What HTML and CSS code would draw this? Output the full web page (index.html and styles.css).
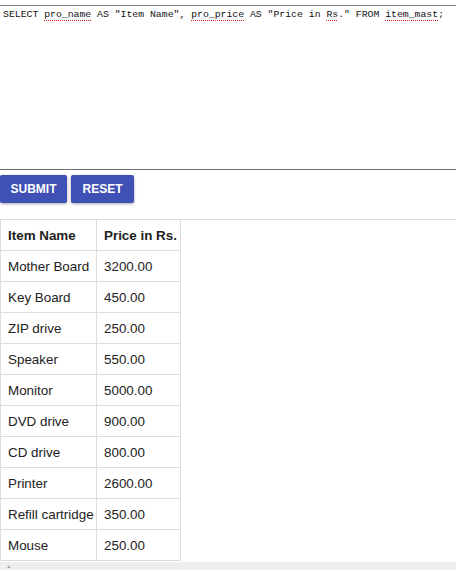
FILE: index.html
```html
<!DOCTYPE html>
<html>
<head>
<meta charset="utf-8">
<link rel="stylesheet" href="styles.css">
</head>
<body>
<div class="editor">
  <div class="code">SELECT <span class="sp">pro_name</span> AS "Item Name", <span class="sp">pro_price</span> AS "Price in <span class="sp">Rs</span>." FROM <span class="sp">item_mast</span>;</div>
</div>
<div class="actions">
  <button class="btn">SUBMIT</button>
  <button class="btn">RESET</button>
</div>
<div class="results">
  <table class="grid">
    <colgroup><col class="c1"><col class="c2"></colgroup>
    <thead>
      <tr><th>Item Name</th><th>Price in Rs.</th></tr>
    </thead>
    <tbody>
      <tr><td>Mother Board</td><td>3200.00</td></tr>
      <tr><td>Key Board</td><td>450.00</td></tr>
      <tr><td>ZIP drive</td><td>250.00</td></tr>
      <tr><td>Speaker</td><td>550.00</td></tr>
      <tr><td>Monitor</td><td>5000.00</td></tr>
      <tr><td>DVD drive</td><td>900.00</td></tr>
      <tr><td>CD drive</td><td>800.00</td></tr>
      <tr><td>Printer</td><td>2600.00</td></tr>
      <tr><td>Refill cartridge</td><td>350.00</td></tr>
      <tr><td>Mouse</td><td>250.00</td></tr>
    </tbody>
  </table>
</div>
<div class="scrollbar"><span class="arrow"></span></div>
</body>
</html>
```
FILE: styles.css
```css
html, body {
  margin: 0;
  padding: 0;
  background: #fff;
  width: 456px;
  height: 570px;
  overflow: hidden;
}
body {
  font-family: "Liberation Sans", Arial, sans-serif;
  color: #222;
}
.editor {
  margin-top: 5px;
  height: 163px;
  border-top: 1px solid #8a8a8a;
  border-bottom: 1px solid #6f6f6f;
}
.code {
  font-family: "Liberation Mono", "DejaVu Sans Mono", monospace;
  font-size: 9.8px;
  line-height: 14px;
  padding: 2px 0 0 3px;
  color: #111;
  white-space: pre;
}
.sp {
  text-decoration: underline dotted #e02020;
  text-decoration-thickness: 1px;
  text-underline-offset: 3px;
}
.actions {
  display: flex;
  gap: 4px;
  padding: 5px 0 0 0;
  height: 49px;
  box-sizing: border-box;
}
.btn {
  height: 28px;
  border: none;
  border-radius: 2px;
  background: #3f51b5;
  color: #fff;
  font-family: "Liberation Sans", Arial, sans-serif;
  font-weight: bold;
  font-size: 12px;
  padding: 0;
  box-shadow: 0 1px 3px rgba(0,0,0,0.35);
}
.btn:first-child { width: 67px; }
.btn:last-child { width: 63px; }
.results {
  border-top: 1px solid #dcdcdc;
  height: 342px;
}
.grid {
  border-collapse: collapse;
  table-layout: fixed;
  width: 180px;
  font-size: 13.4px;
}
.grid col.c1 { width: 96px; }
.grid col.c2 { width: 84px; }
.grid th, .grid td {
  border: 1px solid #dcdcdc;
  height: 30px;
  padding: 0 0 0 7px;
  text-align: left;
  white-space: nowrap;
  overflow: visible;
}
.grid thead th { border-top: none; }
.grid th { font-weight: bold; }
.scrollbar {
  position: relative;
  height: 8px;
  background: #eeeeee;
}
.arrow {
  position: absolute;
  left: 7px;
  top: 3px;
  width: 0;
  height: 0;
  border-bottom: 3px solid #a0a0a0;
  border-left: 3px solid transparent;
}
```
